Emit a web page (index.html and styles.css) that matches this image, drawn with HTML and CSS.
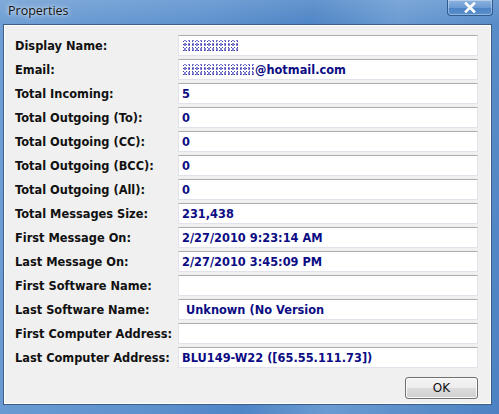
FILE: index.html
```html
<!DOCTYPE html>
<html>
<head>
<meta charset="utf-8">
<link rel="stylesheet" href="styles.css">
</head>
<body>
<div class="window">
  <div class="titlebar">
    <span class="title">Properties</span>
    <div class="close"><svg width="14" height="11" viewBox="0 0 14 11"><path d="M3 1.5 L11 9.5 M11 1.5 L3 9.5" stroke="#fff" stroke-width="2.6" stroke-linecap="square"/></svg></div>
  </div>
  <div class="client">
    <div class="grid">
      <div class="label">Display Name:</div>
      <div class="box"><span class="blur w56"></span></div>
      <div class="label">Email:</div>
      <div class="box"><span class="blur w73"></span>@hotmail.com</div>
      <div class="label">Total Incoming:</div>
      <div class="box">5</div>
      <div class="label">Total Outgoing (To):</div>
      <div class="box">0</div>
      <div class="label">Total Outgoing (CC):</div>
      <div class="box">0</div>
      <div class="label">Total Outgoing (BCC):</div>
      <div class="box">0</div>
      <div class="label">Total Outgoing (All):</div>
      <div class="box">0</div>
      <div class="label">Total Messages Size:</div>
      <div class="box">231,438</div>
      <div class="label">First Message On:</div>
      <div class="box">2/27/2010 9:23:14 AM</div>
      <div class="label">Last Message On:</div>
      <div class="box">2/27/2010 3:45:09 PM</div>
      <div class="label">First Software Name:</div>
      <div class="box"></div>
      <div class="label">Last Software Name:</div>
      <div class="box">&nbsp;Unknown (No Version</div>
      <div class="label">First Computer Address:</div>
      <div class="box"></div>
      <div class="label">Last Computer Address:</div>
      <div class="box">BLU149-W22 ([65.55.111.73])</div>
    </div>
    <div class="actions"><button class="ok">OK</button></div>
  </div>
</div>
</body>
</html>
```

FILE: styles.css
```css
html, body {
  margin: 0;
  padding: 0;
  width: 499px;
  height: 414px;
  overflow: hidden;
}
.window {
  position: relative;
  width: 499px;
  height: 414px;
  background: linear-gradient(100deg, #6f9fd4 0%, #5f93cf 35%, #4f86c6 55%, #6a9bd2 70%, #4c82c2 100%);
  display: flex;
  flex-direction: column;
}
.titlebar {
  height: 24px;
  display: flex;
  align-items: center;
  padding-left: 8px;
  background: linear-gradient(180deg, rgba(255,255,255,0.12), rgba(255,255,255,0));
}
.title {
  font-family: "Open Sans", "Noto Sans", sans-serif;
  font-size: 12.5px;
  color: #111;
  text-shadow: 0 0 6px rgba(255,255,255,0.8), 0 0 3px rgba(255,255,255,0.7);
  margin-top: -4px;
}
.close {
  position: absolute;
  top: 0;
  right: 6px;
  width: 46px;
  height: 16px;
  box-sizing: border-box;
  border: 1px solid #2f5b8e;
  border-top: none;
  border-radius: 0 0 4px 4px;
  background: linear-gradient(180deg, #8db4e0 0%, #6b9bd3 50%, #4d83c4 51%, #5a8fcc 100%);
  box-shadow: inset 0 0 0 1px rgba(255,255,255,0.35);
  display: flex;
  align-items: center;
  justify-content: center;
}
.client {
  margin: 0 7px 0 3px;
  height: 381px;
  box-sizing: border-box;
  border: 1px solid #3b5f87;
  box-shadow: inset 0 0 0 1px #ffffff;
  background: #f0f0f0;
  padding: 10px 13px 0 11px;
}
.grid {
  display: grid;
  grid-template-columns: 163px 300px;
  grid-auto-rows: 21px;
  row-gap: 3px;
}
.label {
  font-family: "DejaVu Sans", Verdana, sans-serif;
  font-weight: bold;
  font-size: 11.4px;
  color: #111;
  display: flex;
  align-items: center;
}
.box {
  box-sizing: border-box;
  background: #fff;
  border: 1px solid #e2e3ea;
  border-top-color: #abadb3;
  font-family: "DejaVu Sans", Verdana, sans-serif;
  font-weight: bold;
  font-size: 11.4px;
  color: #0c0c84;
  display: flex;
  align-items: center;
  padding-left: 3px;
  white-space: nowrap;
}
.blur {
  display: inline-block;
  height: 12px;
  background-image:
    radial-gradient(circle, #1b1b9c 40%, transparent 45%),
    radial-gradient(circle, #6a6ac8 35%, transparent 40%);
  background-size: 3px 3px, 4px 5px;
  background-position: 0 0, 1px 2px;
  opacity: 0.85;
}
.w56 { width: 56px; }
.w73 { width: 73px; }
.actions {
  display: flex;
  justify-content: flex-end;
  margin-top: 9px;
}
.ok {
  width: 73px;
  height: 22px;
  box-sizing: border-box;
  border: 1px solid #707070;
  border-radius: 3px;
  background: linear-gradient(180deg, #f4f4f4 0%, #ececec 50%, #dcdcdc 51%, #cfcfcf 100%);
  box-shadow: inset 0 0 0 1px #fbfbfb;
  font-family: "DejaVu Sans", sans-serif;
  font-size: 12px;
  color: #111;
  padding: 0;
  display: flex;
  align-items: center;
  justify-content: center;
}
```
